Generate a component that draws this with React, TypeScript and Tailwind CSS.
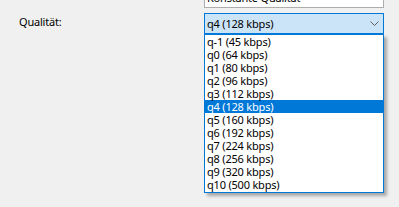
import React from 'react';

const OPTIONS = [
  'q-1 (45 kbps)',
  'q0 (64 kbps)',
  'q1 (80 kbps)',
  'q2 (96 kbps)',
  'q3 (112 kbps)',
  'q4 (128 kbps)',
  'q5 (160 kbps)',
  'q6 (192 kbps)',
  'q7 (224 kbps)',
  'q8 (256 kbps)',
  'q9 (320 kbps)',
  'q10 (500 kbps)',
];

const SELECTED = 5;

function Chevron() {
  return (
    <svg width="9" height="5" viewBox="0 0 9 5" className="block">
      <path d="M0.5 0.5 L4.5 4.5 L8.5 0.5" fill="none" stroke="#606060" strokeWidth="1" />
    </svg>
  );
}

export default function App() {
  return (
    <div
      className="relative w-[399px] h-[207px] overflow-hidden bg-[#f0f0f0] text-[11px] leading-[13px] tracking-[-0.2px] text-black"
      style={{ fontFamily: '"Noto Sans", "Open Sans", sans-serif' }}
    >
      {/* previous combobox, cut off at the top */}
      <div className="ml-[204px] mt-[-13px] w-[180px] h-[21px] bg-white border border-[#adadad] flex items-center pl-[2px] pr-[4px]">
        <span className="flex-1 whitespace-nowrap">Konstante Qualität</span>
        <Chevron />
      </div>

      <div className="flex mt-[5px]">
        <div className="w-[204px] pl-[19px] pt-[2px]">Qualität:</div>

        <div className="relative w-[180px]">
          <div className="h-[21px] bg-[#cce4f7] border border-[#0078d7] flex items-center pl-[2px] pr-[4px]">
            <span className="flex-1 whitespace-nowrap">{OPTIONS[SELECTED]}</span>
            <Chevron />
          </div>

          {/* open dropdown list */}
          <div className="absolute left-0 top-full w-[180px] bg-white border border-[#0078d7] pb-[1px] shadow-[3px_3px_3px_rgba(0,0,0,0.3)]">
            {OPTIONS.map((o, i) => (
              <div
                key={o}
                className={`h-[13px] pl-[2px] whitespace-nowrap ${i === SELECTED ? 'bg-[#0078d7] text-white' : ''}`}
              >
                {o}
              </div>
            ))}
          </div>
        </div>
      </div>
    </div>
  );
}
